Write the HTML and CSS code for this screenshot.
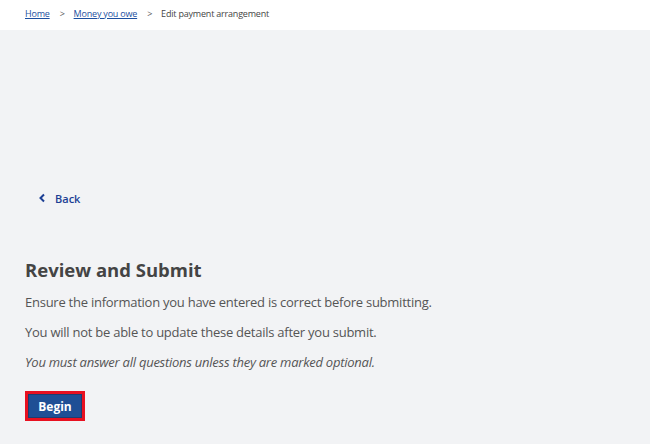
FILE: index.html
```html
<!DOCTYPE html>
<html lang="en">
<head>
  <meta charset="UTF-8" />
  <title>Edit payment arrangement</title>
  <link rel="stylesheet" href="styles.css">
</head>
<body>

  <nav class="breadcrumbs">
    <a href="#">Home</a>
    <span class="sep">&gt;</span>
    <a href="#">Money you owe</a>
    <span class="sep">&gt;</span>
    <span class="current">Edit payment arrangement</span>
  </nav>

  <main class="page">
    <a class="back" href="#">
      <svg width="8" height="10" viewBox="0 0 8 10"><path d="M6 1.5 L2.5 5 L6 8.5" fill="none" stroke="#1c3f94" stroke-width="2"/></svg>
      Back
    </a>

    <h1>Review and Submit</h1>
    <p>Ensure the information you have entered is correct before submitting.</p>
    <p>You will not be able to update these details after you submit.</p>
    <p class="note">You must answer all questions unless they are marked optional.</p>

    <button class="begin">Begin</button>
  </main>

</body>
</html>
```

FILE: styles.css
```css
body {
  margin: 0;
  font-family: "Open Sans", Arial, sans-serif;
  background-color: #f2f3f5;
  color: #555;
}

.breadcrumbs {
  background: #fff;
  height: 30px;
  padding: 0 25px 4px;
  display: flex;
  align-items: center;
  font-size: 9px;
  letter-spacing: -0.2px;
  color: #444;
  box-sizing: border-box;
}

.breadcrumbs a {
  color: #1c4fa0;
}

.breadcrumbs .sep {
  margin: 0 9px 0 10px;
  color: #555;
}

.page {
  padding: 156px 25px 0;
}

.back {
  display: inline-flex;
  align-items: center;
  gap: 9px;
  margin-left: 13px;
  color: #1c3f94;
  text-decoration: none;
  font-size: 11px;
  font-weight: 600;
}

h1 {
  margin: 49px 0 0;
  font-size: 18.5px;
  line-height: 25px;
  font-weight: 700;
  color: #444;
}

p {
  margin: 11px 0 0;
  font-size: 13px;
  letter-spacing: -0.25px;
  line-height: 19px;
}

h1 + p {
  margin-top: 11px;
}

p.note {
  font-style: italic;
}

.begin {
  margin-top: 19px;
  background: #1f4f95;
  color: #fff;
  border: 3px solid #e81020;
  outline: 1px solid #1f3c70;
  outline-offset: -4px;
  font-family: inherit;
  font-weight: 700;
  font-size: 12px;
  width: 60px;
  height: 30px;
  padding: 0;
}
```
